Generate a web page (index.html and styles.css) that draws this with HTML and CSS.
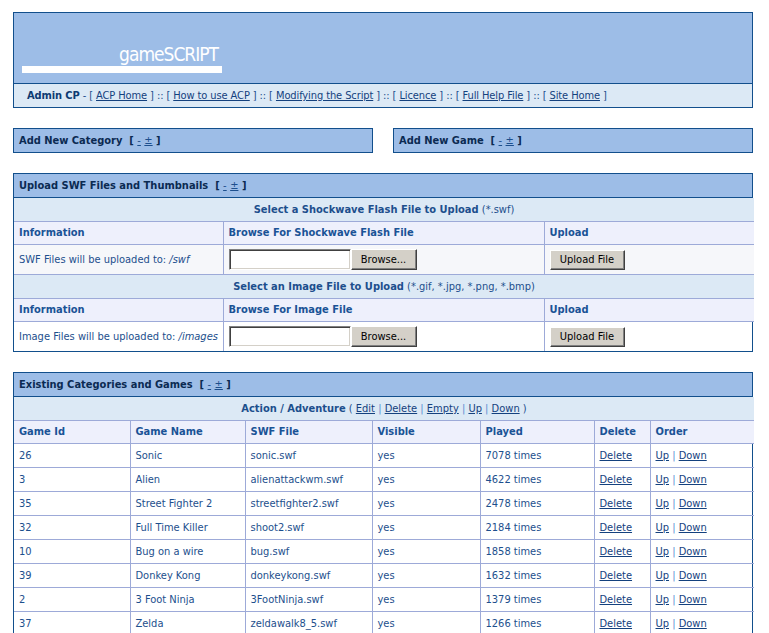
FILE: index.html
```html
<html>
<head>
<title>gameSCRIPT - Admin CP</title>
<link rel="stylesheet" href="styles.css">
</head>
<body>
<div class="page">

<div class="masthead">
  <div class="banner">
    <div class="logo">
      <div class="logo-text">gameSCRIPT</div>
      <div class="logo-bar"></div>
    </div>
  </div>
  <div class="nav">
    <b>Admin CP</b> - [ <a href="#">ACP Home</a> ] :: [ <a href="#">How to use ACP</a> ] :: [ <a href="#">Modifying the Script</a> ] :: [ <a href="#">Licence</a> ] :: [ <a href="#">Full Help File</a> ] :: [ <a href="#">Site Home</a> ]
  </div>
</div>

<div class="toggles">
  <div class="bar-box">Add New Category&nbsp; <span class="tog">[ <a href="#">-</a> <a href="#">&plusmn;</a> ]</span></div>
  <div class="bar-box">Add New Game&nbsp; <span class="tog">[ <a href="#">-</a> <a href="#">&plusmn;</a> ]</span></div>
</div>

<div class="panel">
  <div class="panel-title">Upload SWF Files and Thumbnails&nbsp; <span class="tog">[ <a href="#">-</a> <a href="#">&plusmn;</a> ]</span></div>
  <table class="grid upload">
    <colgroup><col class="c-info"><col class="c-browse"><col class="c-send"></colgroup>
    <tr class="sub"><td colspan="3"><b>Select a Shockwave Flash File to Upload</b> (*.swf)</td></tr>
    <tr class="head"><td>Information</td><td>Browse For Shockwave Flash File</td><td>Upload</td></tr>
    <tr class="form-row shade">
      <td>SWF Files will be uploaded to: <i>/swf</i></td>
      <td><div class="picker"><input type="text" class="file-field"><button class="btn browse">Browse...</button></div></td>
      <td><button class="btn send">Upload File</button></td>
    </tr>
    <tr class="sub"><td colspan="3"><b>Select an Image File to Upload</b> (*.gif, *.jpg, *.png, *.bmp)</td></tr>
    <tr class="head"><td>Information</td><td>Browse For Image File</td><td>Upload</td></tr>
    <tr class="form-row">
      <td>Image Files will be uploaded to: <i>/images</i></td>
      <td><div class="picker"><input type="text" class="file-field"><button class="btn browse">Browse...</button></div></td>
      <td><button class="btn send">Upload File</button></td>
    </tr>
  </table>
</div>

<div class="panel">
  <div class="panel-title">Existing Categories and Games&nbsp; <span class="tog">[ <a href="#">-</a> <a href="#">&plusmn;</a> ]</span></div>
  <table class="grid games">
    <colgroup>
      <col class="g-id"><col class="g-name"><col class="g-swf"><col class="g-vis"><col class="g-played"><col class="g-del"><col class="g-order">
    </colgroup>
    <tr class="sub"><td colspan="7"><b>Action / Adventure</b> ( <a href="#">Edit</a> <span class="sep">|</span> <a href="#">Delete</a> <span class="sep">|</span> <a href="#">Empty</a> <span class="sep">|</span> <a href="#">Up</a> <span class="sep">|</span> <a href="#">Down</a> )</td></tr>
    <tr class="head"><td>Game Id</td><td>Game Name</td><td>SWF File</td><td>Visible</td><td>Played</td><td>Delete</td><td>Order</td></tr>
    <tr><td>26</td><td>Sonic</td><td>sonic.swf</td><td>yes</td><td>7078 times</td><td><a href="#">Delete</a></td><td><a href="#">Up</a> <span class="sep">|</span> <a href="#">Down</a></td></tr>
    <tr><td>3</td><td>Alien</td><td>alienattackwm.swf</td><td>yes</td><td>4622 times</td><td><a href="#">Delete</a></td><td><a href="#">Up</a> <span class="sep">|</span> <a href="#">Down</a></td></tr>
    <tr><td>35</td><td>Street Fighter 2</td><td>streetfighter2.swf</td><td>yes</td><td>2478 times</td><td><a href="#">Delete</a></td><td><a href="#">Up</a> <span class="sep">|</span> <a href="#">Down</a></td></tr>
    <tr><td>32</td><td>Full Time Killer</td><td>shoot2.swf</td><td>yes</td><td>2184 times</td><td><a href="#">Delete</a></td><td><a href="#">Up</a> <span class="sep">|</span> <a href="#">Down</a></td></tr>
    <tr><td>10</td><td>Bug on a wire</td><td>bug.swf</td><td>yes</td><td>1858 times</td><td><a href="#">Delete</a></td><td><a href="#">Up</a> <span class="sep">|</span> <a href="#">Down</a></td></tr>
    <tr><td>39</td><td>Donkey Kong</td><td>donkeykong.swf</td><td>yes</td><td>1632 times</td><td><a href="#">Delete</a></td><td><a href="#">Up</a> <span class="sep">|</span> <a href="#">Down</a></td></tr>
    <tr><td>2</td><td>3 Foot Ninja</td><td>3FootNinja.swf</td><td>yes</td><td>1379 times</td><td><a href="#">Delete</a></td><td><a href="#">Up</a> <span class="sep">|</span> <a href="#">Down</a></td></tr>
    <tr><td>37</td><td>Zelda</td><td>zeldawalk8_5.swf</td><td>yes</td><td>1266 times</td><td><a href="#">Delete</a></td><td><a href="#">Up</a> <span class="sep">|</span> <a href="#">Down</a></td></tr>
  </table>
</div>

</div>
</body>
</html>
```

FILE: styles.css
```css
body {
  margin: 12px 0 0 13px;
  font-family: "DejaVu Sans Condensed", "Liberation Sans", sans-serif;
  font-size: 11px;
  color: #1d4f8d;
  background: #fff;
}

a {
  color: #14417e;
}

.page {
  width: 740px;
}

/* masthead */
.masthead {
  border: 1px solid #124f8c;
}

.banner {
  background: #9dbde7;
  height: 70px;
  border-bottom: 1px solid #124f8c;
}

.logo {
  width: 200px;
  margin-left: 8px;
  padding-top: 31px;
}

.logo-text {
  color: #fff;
  font-size: 19px;
  line-height: 20px;
  letter-spacing: -1px;
  text-align: right;
  padding-right: 4px;
}

.logo-bar {
  margin-top: 2px;
  height: 7px;
  background: #fff;
}

.nav {
  background: #dce9f5;
  line-height: 23px;
  padding-left: 13px;
  letter-spacing: -0.1px;
}

.nav b {
  color: #0e3b72;
}

/* collapsible bars */
.toggles {
  display: flex;
  justify-content: space-between;
  margin-top: 20px;
}

.bar-box {
  width: 360px;
  box-sizing: border-box;
  border: 1px solid #124f8c;
  background: #9dbde7;
  line-height: 23px;
  padding-left: 5px;
  font-weight: bold;
  color: #0b2a52;
}

.tog a {
  font-weight: normal;
  color: #1d4f8d;
}

.panel {
  margin-top: 20px;
  border: 1px solid #124f8c;
}

.panel-title {
  background: #9dbde7;
  border-bottom: 1px solid #124f8c;
  line-height: 23px;
  padding-left: 5px;
  font-weight: bold;
  color: #0b2a52;
}

/* tables */
.grid {
  width: 100%;
  font-size: 11px;
  color: #1d4f8d;
  border-collapse: collapse;
  border-style: hidden;
  table-layout: fixed;
}

.grid td {
  border: 1px solid #9daad8;
  padding: 0 5px;
  line-height: 23px;
  white-space: nowrap;
  overflow: hidden;
}

.grid tr.sub td {
  background: #dce9f5;
  text-align: center;
}

.grid tr.head td {
  background: #eef0fc;
  font-weight: bold;
  line-height: 22px;
  color: #1a5396;
}

.sep {
  color: #5b8fd2;
}

.c-info { width: 209px; }
.c-browse { width: 321px; }
.c-send { width: 210px; }

.form-row td {
  padding: 4px 5px;
  line-height: 21px;
  vertical-align: middle;
}

.form-row.shade td {
  background: #f6f7fa;
}

.picker {
  display: flex;
}

.file-field {
  width: 122px;
  height: 21px;
  box-sizing: border-box;
  margin: 0;
  border: 1px solid;
  border-color: #808080 #fff #fff #808080;
  box-shadow: inset 1px 1px #404040, inset -1px -1px #d4d0c8;
  background: #fff;
}

.btn {
  height: 21px;
  box-sizing: border-box;
  margin: 0;
  padding: 0;
  font-family: "DejaVu Sans Condensed", "Liberation Sans", sans-serif;
  font-size: 11px;
  color: #000;
  background: #d4d0c8;
  border: 1px solid;
  border-color: #fff #404040 #404040 #fff;
  box-shadow: inset -1px -1px #808080;
}

.browse { width: 66px; }
.send { width: 75px; height: 20px; }

.g-id { width: 116px; }
.g-name { width: 115px; }
.g-swf { width: 127px; }
.g-vis { width: 108px; }
.g-played { width: 114px; }
.g-del { width: 56px; }
.g-order { width: 104px; }
```
